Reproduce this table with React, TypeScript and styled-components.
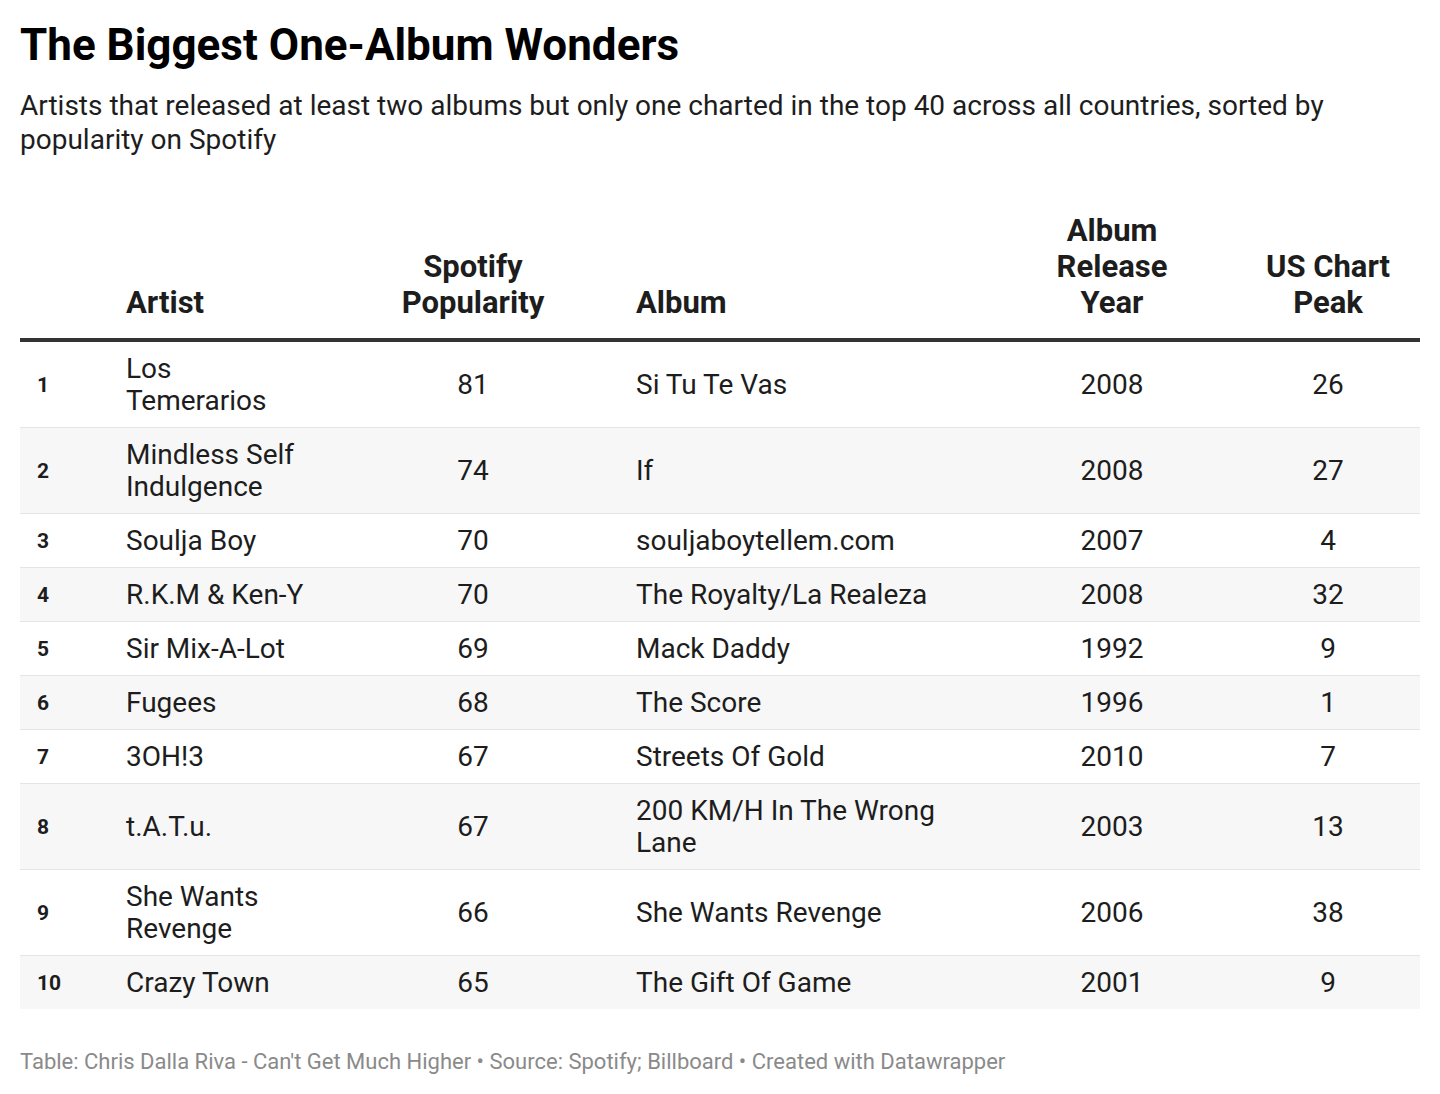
import React from "react";
import styled, { createGlobalStyle } from "styled-components";

const GlobalStyle = createGlobalStyle`
  *, *::before, *::after {
    box-sizing: border-box;
  }
  html, body {
    margin: 0;
    padding: 0;
    background: #ffffff;
  }
  body {
    font-family: Roboto, "Noto Sans", "Liberation Sans", sans-serif;
    color: #1d1d1d;
  }
`;

interface Row {
  rank: number;
  artist: string;
  popularity: number;
  album: string;
  year: number;
  peak: number;
}

const rows: Row[] = [
  { rank: 1, artist: "Los Temerarios", popularity: 81, album: "Si Tu Te Vas", year: 2008, peak: 26 },
  { rank: 2, artist: "Mindless Self Indulgence", popularity: 74, album: "If", year: 2008, peak: 27 },
  { rank: 3, artist: "Soulja Boy", popularity: 70, album: "souljaboytellem.com", year: 2007, peak: 4 },
  { rank: 4, artist: "R.K.M & Ken-Y", popularity: 70, album: "The Royalty/La Realeza", year: 2008, peak: 32 },
  { rank: 5, artist: "Sir Mix-A-Lot", popularity: 69, album: "Mack Daddy", year: 1992, peak: 9 },
  { rank: 6, artist: "Fugees", popularity: 68, album: "The Score", year: 1996, peak: 1 },
  { rank: 7, artist: "3OH!3", popularity: 67, album: "Streets Of Gold", year: 2010, peak: 7 },
  { rank: 8, artist: "t.A.T.u.", popularity: 67, album: "200 KM/H In The Wrong Lane", year: 2003, peak: 13 },
  { rank: 9, artist: "She Wants Revenge", popularity: 66, album: "She Wants Revenge", year: 2006, peak: 38 },
  { rank: 10, artist: "Crazy Town", popularity: 65, album: "The Gift Of Game", year: 2001, peak: 9 },
];

const Page = styled.div`
  padding: 20px 20px 0 20px;
  width: 1440px;
`;

const Title = styled.h1`
  margin: 0;
  font-size: 44px;
  line-height: 50px;
  font-weight: 700;
  color: #000000;
`;

const Subtitle = styled.p`
  margin: 19px 0 0 0;
  font-size: 28px;
  line-height: 34px;
  color: #1d1d1d;
`;

const Table = styled.table`
  margin-top: 56px;
  width: 1400px;
  table-layout: fixed;
  border-collapse: collapse;
`;

type Align = "left" | "center";

const HeadCell = styled.th<{ $w: number; $align: Align }>`
  width: ${(p) => p.$w}px;
  text-align: ${(p) => p.$align};
  vertical-align: bottom;
  padding: 0 16px 17px 16px;
  font-size: 31px;
  line-height: 36px;
  font-weight: 700;
  color: #1d1d1d;
  border-bottom: 4px solid #333333;
`;

const HeadLabel = styled.span<{ $max?: number }>`
  display: inline-block;
  max-width: ${(p) => (p.$max ? `${p.$max}px` : "none")};
`;

const BodyRow = styled.tr<{ $shaded: boolean }>`
  background: ${(p) => (p.$shaded ? "#f7f7f7" : "#ffffff")};
  border-bottom: 1px solid #e5e5e5;
  &:last-child {
    border-bottom: none;
  }
`;

const Cell = styled.td<{ $align: Align }>`
  text-align: ${(p) => p.$align};
  vertical-align: middle;
  padding: 11px 16px 10px 16px;
  font-size: 28px;
  line-height: 32px;
  color: #1d1d1d;
`;

const RankCell = styled.td`
  vertical-align: middle;
  padding: 11px 0 10px 17px;
  font-size: 21px;
  line-height: 32px;
  font-weight: 700;
  color: #1d1d1d;
`;

const Footer = styled.div`
  margin-top: 41px;
  font-size: 22px;
  line-height: 24px;
  color: #8a8a8a;
`;

export default function App() {
  return (
    <Page>
      <GlobalStyle />
      <Title>The Biggest One-Album Wonders</Title>
      <Subtitle>
        Artists that released at least two albums but only one charted in the top 40 across all
        countries, sorted by popularity on Spotify
      </Subtitle>
      <Table>
        <thead>
          <tr>
            <HeadCell $w={90} $align="left" />
            <HeadCell $w={216} $align="left">
              <HeadLabel>Artist</HeadLabel>
            </HeadCell>
            <HeadCell $w={294} $align="center">
              <HeadLabel $max={170}>Spotify Popularity</HeadLabel>
            </HeadCell>
            <HeadCell $w={368} $align="left">
              <HeadLabel>Album</HeadLabel>
            </HeadCell>
            <HeadCell $w={248} $align="center">
              <HeadLabel $max={130}>Album Release Year</HeadLabel>
            </HeadCell>
            <HeadCell $w={184} $align="center">
              <HeadLabel $max={150}>US Chart Peak</HeadLabel>
            </HeadCell>
          </tr>
        </thead>
        <tbody>
          {rows.map((r, i) => (
            <BodyRow key={r.rank} $shaded={i % 2 === 1}>
              <RankCell>{r.rank}</RankCell>
              <Cell $align="left">{r.artist}</Cell>
              <Cell $align="center">{r.popularity}</Cell>
              <Cell $align="left">{r.album}</Cell>
              <Cell $align="center">{r.year}</Cell>
              <Cell $align="center">{r.peak}</Cell>
            </BodyRow>
          ))}
        </tbody>
      </Table>
      <Footer>
        Table: Chris Dalla Riva - Can't Get Much Higher • Source: Spotify; Billboard • Created with
        Datawrapper
      </Footer>
    </Page>
  );
}
